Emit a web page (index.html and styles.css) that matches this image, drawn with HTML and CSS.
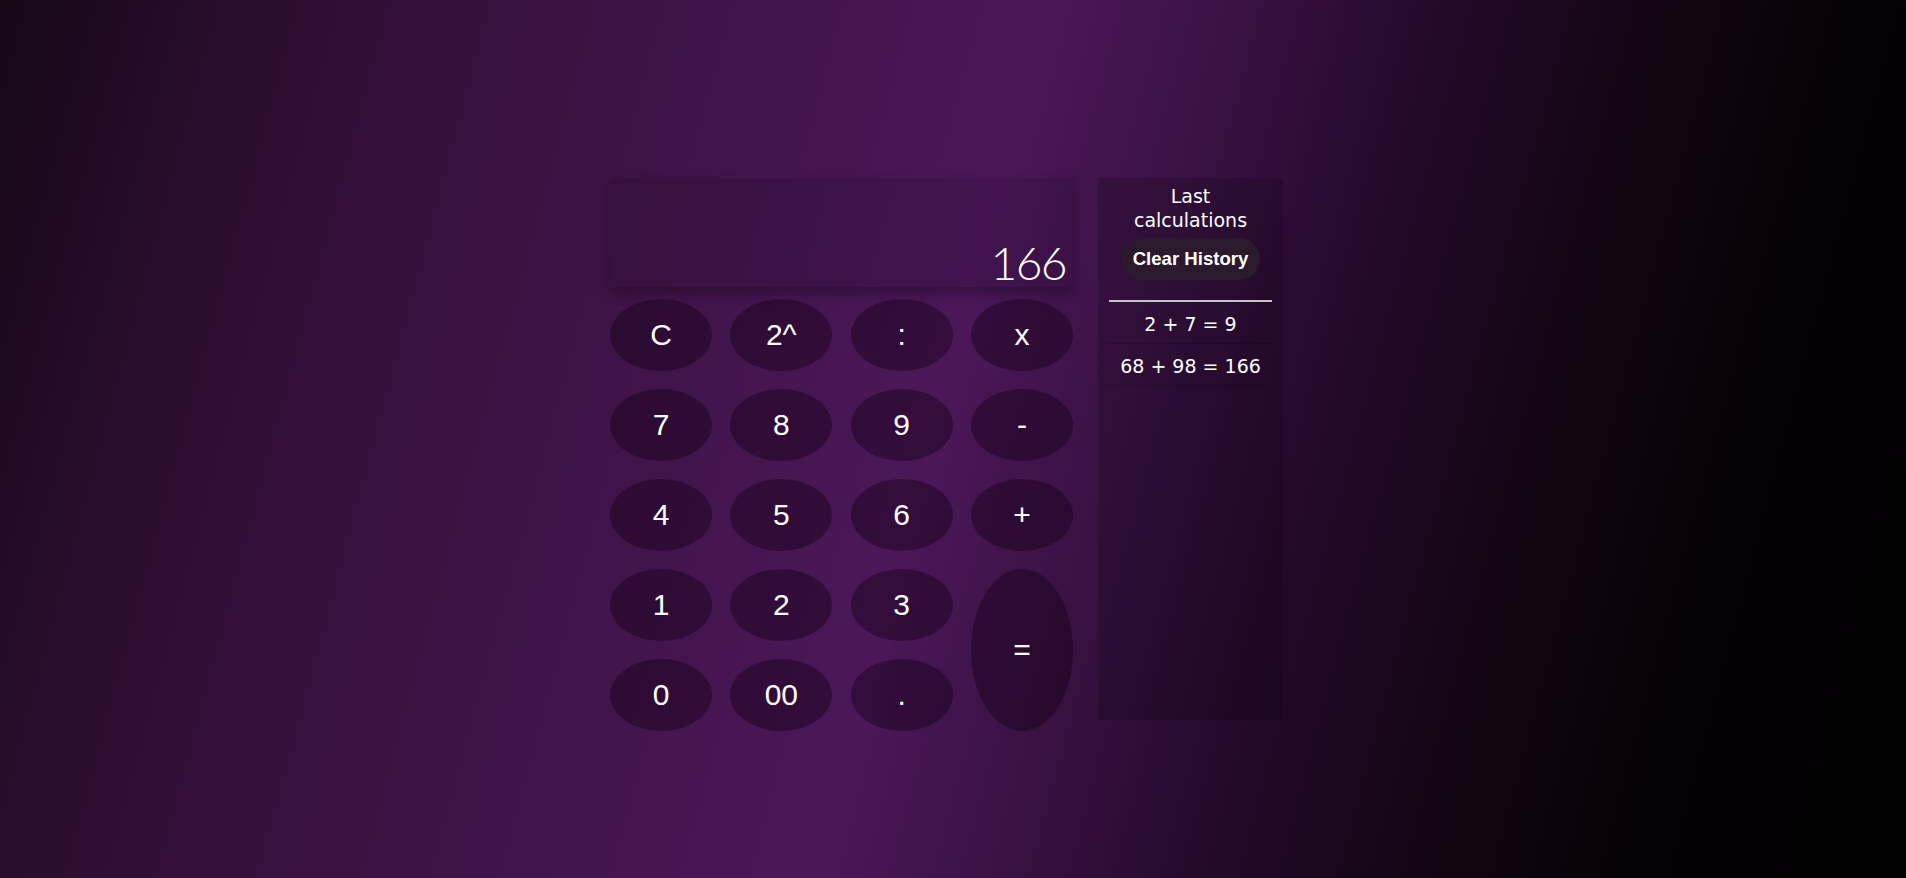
FILE: index.html
```html
<!DOCTYPE html>
<html lang="en">
<head>
<meta charset="utf-8">
<title>Calculator</title>
<link rel="stylesheet" href="styles.css">
</head>
<body>
<main class="page">
  <section class="calculator">
    <div class="display"><span class="display-value">166</span></div>
    <div class="keys">
      <button class="key">C</button>
      <button class="key">2^</button>
      <button class="key">:</button>
      <button class="key">x</button>
      <button class="key">7</button>
      <button class="key">8</button>
      <button class="key">9</button>
      <button class="key">-</button>
      <button class="key">4</button>
      <button class="key">5</button>
      <button class="key">6</button>
      <button class="key">+</button>
      <button class="key">1</button>
      <button class="key">2</button>
      <button class="key">3</button>
      <button class="key key-equals">=</button>
      <button class="key">0</button>
      <button class="key">00</button>
      <button class="key">.</button>
    </div>
  </section>
  <aside class="history">
    <h2 class="history-title">Last calculations</h2>
    <button class="clear-btn">Clear History</button>
    <hr class="history-rule">
    <ul class="history-list">
      <li class="history-item">2 + 7 = 9</li>
      <li class="history-item">68 + 98 = 166</li>
    </ul>
  </aside>
</main>
</body>
</html>
```
FILE: styles.css
```css
* { box-sizing: border-box; }

html, body {
  margin: 0;
  padding: 0;
  height: 100%;
}

body {
  min-height: 100vh;
  background: linear-gradient(105deg,
    #160717 0%,
    #2a0d2e 12%,
    #3a1241 27%,
    #4b1759 49%,
    #3a1244 57%,
    #24092a 67%,
    #120512 78%,
    #050105 88%,
    #000000 100%);
  font-family: "Liberation Sans", Arial, sans-serif;
  color: #fff;
  overflow: hidden;
}

.page {
  display: flex;
  justify-content: center;
  align-items: flex-start;
  gap: 25px;
  padding: 178px 13px 0 0;
}

.calculator {
  width: 463px;
}

.display {
  height: 109px;
  background: rgba(0, 0, 0, 0.1);
  box-shadow: 0 6px 12px rgba(0, 0, 0, 0.3);
  display: flex;
  justify-content: flex-end;
  align-items: flex-end;
  padding: 0 7px 1px 0;
}

.display-value {
  font-family: "Lato", "Inter", sans-serif;
  font-weight: 300;
  font-size: 46px;
  line-height: 46px;
  letter-spacing: -1.5px;
}

.keys {
  margin-top: 12px;
  display: grid;
  grid-template-columns: repeat(4, 1fr);
  grid-auto-rows: 72px;
  column-gap: 18.3px;
  row-gap: 18px;
}

.key {
  border: none;
  border-radius: 50%;
  background: rgba(20, 0, 20, 0.42);
  color: #fff;
  font-family: "Liberation Sans", Arial, sans-serif;
  font-size: 30px;
  padding: 0;
}

.key-equals {
  grid-column: 4;
  grid-row: 4 / span 2;
}

.history {
  width: 185px;
  height: 542px;
  background: rgba(0, 0, 0, 0.16);
  padding: 6px 8px 0;
  display: flex;
  flex-direction: column;
  align-items: center;
  font-family: "DejaVu Sans", "Noto Sans", sans-serif;
}

.history-title {
  margin: 0;
  max-width: 130px;
  text-align: center;
  font-size: 19px;
  font-weight: 400;
  line-height: 24px;
}

.clear-btn {
  margin-top: 6px;
  height: 42px;
  padding: 0 12px;
  border: none;
  border-radius: 21px;
  background: #2a1a2b;
  color: #fff;
  font-family: "Liberation Sans", Arial, sans-serif;
  font-weight: 700;
  font-size: 18.6px;
}

.history-rule {
  align-self: stretch;
  margin: 20px 3px 0;
  border: none;
  border-top: 2px solid #c8c0ca;
}

.history-list {
  align-self: stretch;
  list-style: none;
  margin: 0;
  padding: 0;
}

.history-item {
  text-align: center;
  font-size: 19px;
  line-height: 24px;
  padding: 10px 0 7px;
  border-bottom: 1px solid rgba(0, 0, 0, 0.18);
}
```
